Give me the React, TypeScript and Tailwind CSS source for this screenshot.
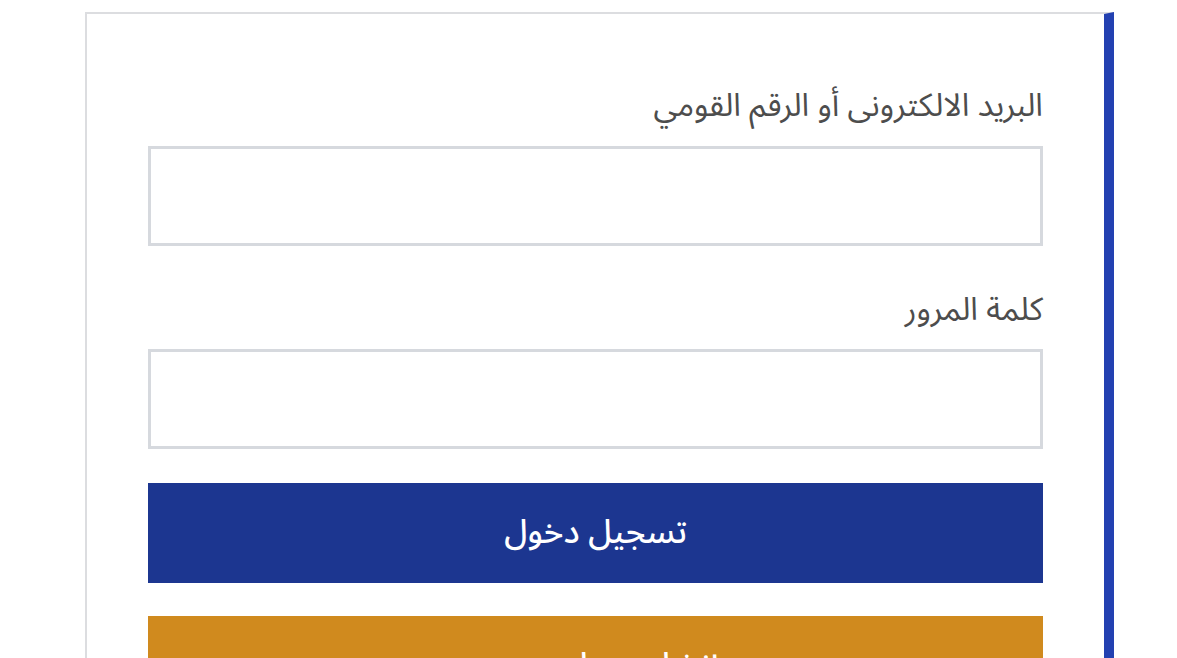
export default function App() {
  return (
    <div className="min-h-[658px] bg-white pt-[12px]" style={{ fontFamily: '"Noto Sans Arabic", "DejaVu Sans", sans-serif' }}>
      <div
        dir="rtl"
        className="ml-[85px] w-[1029px] border-t-2 border-l-2 border-r-[10px] border-t-[#dcdde0] border-l-[#dcdde0] border-r-[#2341b1] px-[61px] pt-[74px] pb-10"
      >
        <label className="block text-[32px] leading-[36px] text-[#4d4d4d]">البريد الالكترونى أو الرقم القومي</label>
        <input type="text" className="mt-[22px] block h-[100px] w-full border-[3px] border-[#d6d9de] bg-white outline-none" />

        <label className="mt-[46px] block text-[32px] leading-[36px] text-[#4d4d4d]">كلمة المرور</label>
        <input type="password" className="mt-[21px] block h-[100px] w-full border-[3px] border-[#d6d9de] bg-white outline-none" />

        <button className="mt-[34px] flex h-[100px] w-full items-center justify-center bg-[#1c3690] text-[33px] font-medium text-white">
          تسجيل دخول
        </button>
        <button className="mt-[33px] flex h-[100px] w-full items-center justify-center bg-[#d08a1e] text-[33px] font-medium text-white">
          إنشاء حساب جديد
        </button>
      </div>
    </div>
  )
}
